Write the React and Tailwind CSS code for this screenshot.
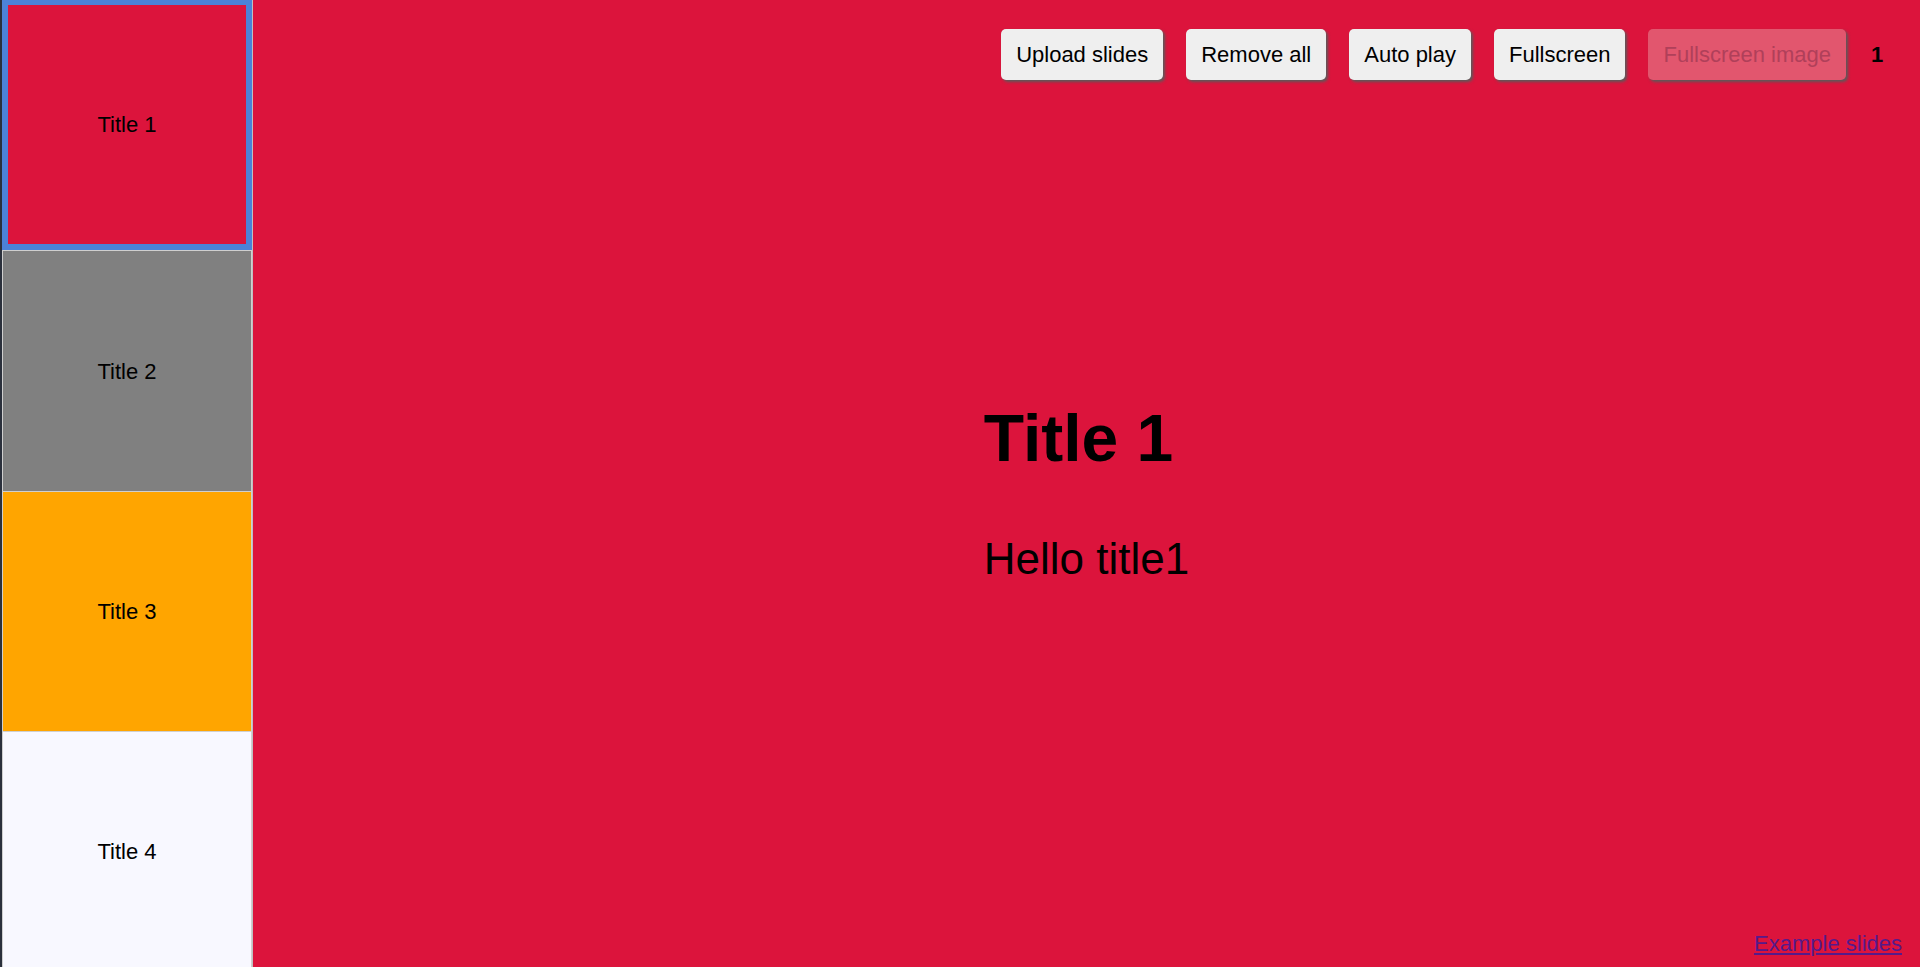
import React, { useState } from "react";

const slides = [
  { title: "Title 1", body: "Hello title1", bg: "bg-[#dc143c]", h: "h-[250px]" },
  { title: "Title 2", body: "Hello title2", bg: "bg-[#808080]", h: "h-[241px]" },
  { title: "Title 3", body: "Hello title3", bg: "bg-[#ffa500]", h: "h-[240px]" },
  { title: "Title 4", body: "Hello title4", bg: "bg-[#f8f8ff]", h: "h-[240px]" },
];

const Button = ({ children, disabled }) => (
  <button
    disabled={disabled}
    className={
      disabled
        ? "rounded-[5px] bg-[#e2566e] px-[15px] py-[13px] text-[22px] leading-[25px] text-[#b0405a] shadow-[2px_2px_3px_#5a5a5a]"
        : "rounded-[5px] bg-[#efefef] px-[15px] py-[13px] text-[22px] leading-[25px] text-black shadow-[2px_2px_3px_#5a5a5a]"
    }
  >
    {children}
  </button>
);

export default function App() {
  const [current, setCurrent] = useState(0);
  const slide = slides[current];

  return (
    <div className="flex h-[967px] w-full overflow-hidden font-['Liberation_Sans',Arial,sans-serif]">
      {/* strip of whatever sits behind the page */}
      <div className="w-[2px] shrink-0 bg-[#2b303c]"></div>

      {/* thumbnails */}
      <div className="flex w-[251px] shrink-0 flex-col overflow-hidden border-r border-[#c0c0c0]">
        {slides.map((s, i) => (
          <div
            key={s.title}
            onClick={() => setCurrent(i)}
            className={
              i === current
                ? `${s.bg} ${s.h} flex w-[250px] shrink-0 cursor-pointer items-center justify-center border-[6px] border-t-[5px] border-[#4c82d8] text-[22px] text-black`
                : `${s.bg} ${s.h} flex w-[250px] shrink-0 cursor-pointer items-center justify-center border-x border-t border-[#cfcfcf] text-[22px] text-black`
            }
          >
            {s.title}
          </div>
        ))}
      </div>

      {/* current slide */}
      <div className={`${slide.bg} flex flex-1 flex-col`}>
        <div className="flex items-center justify-end gap-[23px] pr-[37px] pt-[29px]">
          <Button>Upload slides</Button>
          <Button>Remove all</Button>
          <Button>Auto play</Button>
          <Button>Fullscreen</Button>
          <Button disabled>Fullscreen image</Button>
          <span className="ml-[2px] w-[12px] text-[22px] font-bold text-black">{current + 1}</span>
        </div>

        <div className="flex flex-1 items-center justify-center pb-[28px]">
          <div className="flex flex-col text-black">
            <h1 className="text-[66px] font-bold leading-[76px]">{slide.title}</h1>
            <p className="mt-[58px] text-[44px] leading-[50px]">{slide.body}</p>
          </div>
        </div>

        <div className="flex justify-end pb-[11px] pr-[18px]">
          <a href="#" className="text-[22px] leading-[25px] text-[#551a8b] underline">
            Example slides
          </a>
        </div>
      </div>
    </div>
  );
}
